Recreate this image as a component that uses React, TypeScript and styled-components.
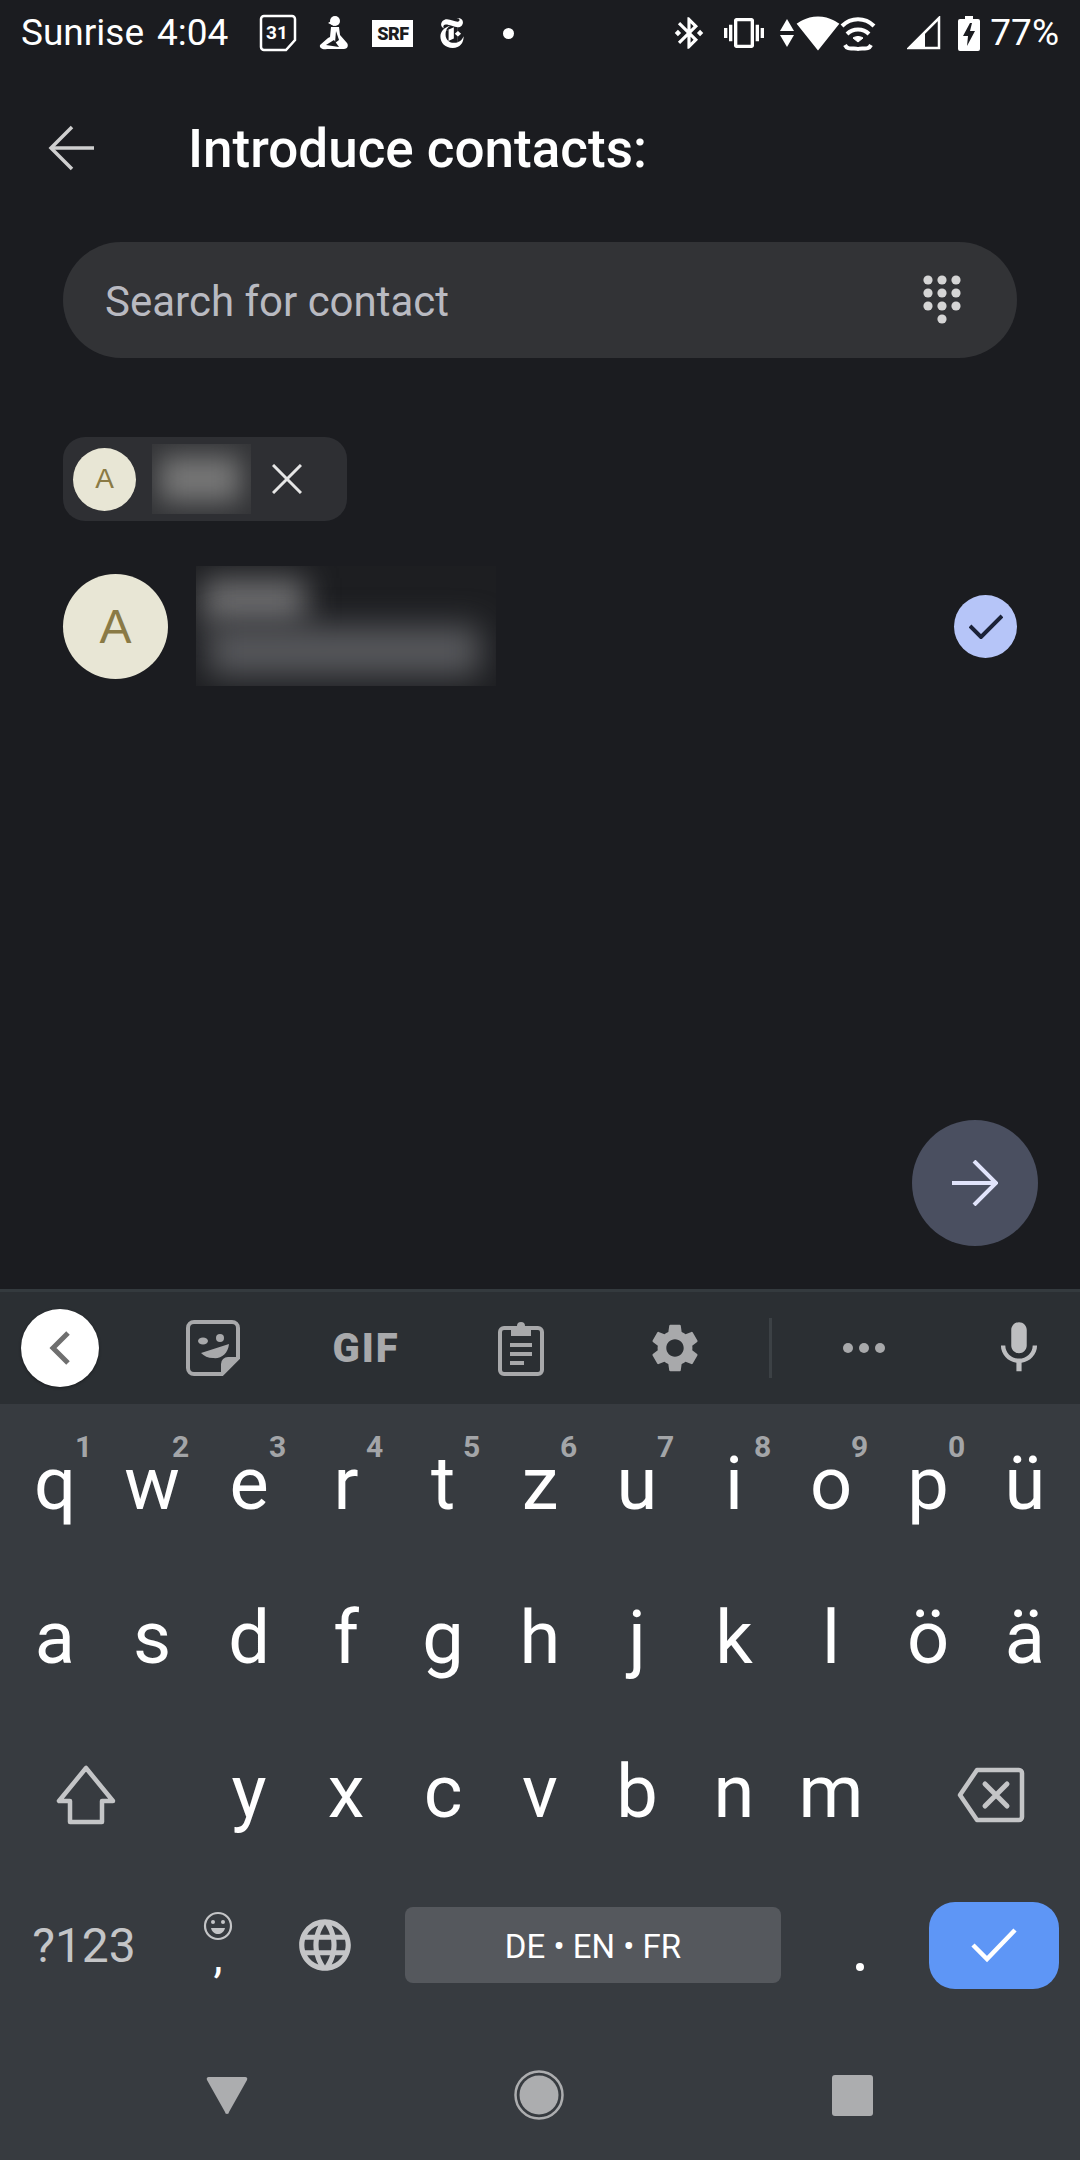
import React from 'react';
import styled, { createGlobalStyle } from 'styled-components';
import { MdBluetoothConnected, MdVibration, MdSignalWifi4Bar, MdSettings, MdMic, MdLanguage } from 'react-icons/md';
import { SiNewyorktimes } from 'react-icons/si';

const GlobalStyle = createGlobalStyle`
  html, body {
    margin: 0;
    padding: 0;
    background: #1b1c20;
    font-family: Roboto, "Noto Sans", sans-serif;
  }
`;

const Screen = styled.div`
  width: 1080px;
  height: 2160px;
  display: flex;
  flex-direction: column;
  overflow: hidden;
  background: #1b1c20;
  color: #fff;
`;

const StatusBar = styled.div`
  height: 66px;
  flex: none;
  display: flex;
  align-items: center;
  padding: 0 21px 0 21px;
  font-size: 37px;
  color: #fff;
`;

const StatusText = styled.span<{ $ml?: number }>`
  margin-left: ${(p) => p.$ml ?? 0}px;
  line-height: 66px;
`;

const StatusIcon = styled.span<{ $ml: number }>`
  margin-left: ${(p) => p.$ml}px;
  display: flex;
  align-items: center;
  justify-content: center;
`;

const SrfBadge = styled.span`
  margin-left: 23px;
  width: 41px;
  height: 27px;
  background: #fff;
  color: #1b1c20;
  font-size: 18px;
  font-weight: 900;
  letter-spacing: -0.5px;
  line-height: 28px;
  text-align: center;
`;

const StatusDot = styled.span`
  margin-left: 36px;
  width: 11px;
  height: 11px;
  border-radius: 50%;
  background: #fff;
`;

const Spacer = styled.div`
  flex: 1;
`;

const Header = styled.div`
  height: 164px;
  display: flex;
  align-items: center;
  padding-left: 48px;
  flex: none;
`;

const PageTitle = styled.h1`
  margin: 2px 0 0 94px;
  font-size: 53px;
  font-weight: 500;
  color: #fff;
`;

const Main = styled.main`
  position: relative;
  flex: 1;
  padding: 12px 63px 0;
`;

const SearchBar = styled.div`
  height: 116px;
  border-radius: 58px;
  background: #323336;
  display: flex;
  align-items: center;
  justify-content: space-between;
  padding: 0 54px 0 42px;
  font-size: 42px;
  color: #b9bac1;
`;

const SearchHint = styled.span`
  padding-top: 2px;
`;

const Chip = styled.div`
  margin-top: 79px;
  width: 284px;
  height: 84px;
  border-radius: 22px;
  background: #2e2f33;
  display: flex;
  align-items: center;
  padding-left: 10px;
  box-sizing: border-box;
`;

const Avatar = styled.div<{ $size: number; $font: number }>`
  width: ${(p) => p.$size}px;
  height: ${(p) => p.$size}px;
  flex: none;
  border-radius: 50%;
  background: #e8e6d5;
  color: #8a7a45;
  font-size: ${(p) => p.$font}px;
  font-family: "Liberation Sans", sans-serif;
  display: flex;
  align-items: center;
  justify-content: center;
`;

const BlurBox = styled.div<{ $w: number; $h: number; $bg: string; $ml: number }>`
  position: relative;
  width: ${(p) => p.$w}px;
  height: ${(p) => p.$h}px;
  margin-left: ${(p) => p.$ml}px;
  flex: none;
  overflow: hidden;
  background: ${(p) => p.$bg};
`;

const BlurBlob = styled.div<{ $l: number; $t: number; $w: number; $h: number; $c: string; $r: number }>`
  position: absolute;
  left: ${(p) => p.$l}px;
  top: ${(p) => p.$t}px;
  width: ${(p) => p.$w}px;
  height: ${(p) => p.$h}px;
  background: ${(p) => p.$c};
  filter: blur(${(p) => p.$r}px);
`;

const ContactRow = styled.div`
  margin-top: 45px;
  display: flex;
  align-items: center;
`;

const CheckBadge = styled.div`
  width: 63px;
  height: 63px;
  border-radius: 50%;
  background: #b6c5f8;
  margin-left: auto;
  display: flex;
  align-items: center;
  justify-content: center;
`;

const Fab = styled.div`
  position: absolute;
  right: 42px;
  bottom: 43px;
  width: 126px;
  height: 126px;
  border-radius: 50%;
  background: #4a4f60;
  display: flex;
  align-items: center;
  justify-content: center;
`;

const Keyboard = styled.div`
  flex: none;
  height: 871px;
  background: #373b40;
  display: flex;
  flex-direction: column;
  overflow: hidden;
`;

const Toolbar = styled.div`
  height: 112px;
  flex: none;
  border-top: 3px solid #343a3e;
  background: #2b2f33;
  display: grid;
  grid-template-columns: 120px 186px 120px 190px 118px 72px 116px 194px;
  align-items: center;
  color: #a8a9ab;
`;

const ToolSlot = styled.div`
  display: flex;
  align-items: center;
  justify-content: center;
`;

const ToolBack = styled.div`
  width: 78px;
  height: 78px;
  border-radius: 50%;
  background: #fff;
  box-shadow: 0 1px 3px rgba(0, 0, 0, 0.4);
  display: flex;
  align-items: center;
  justify-content: center;
`;

const GifLabel = styled.span`
  font-size: 40px;
  font-weight: 900;
  letter-spacing: 2px;
  color: #a8a9ab;
`;

const ToolDivider = styled.div`
  width: 3px;
  height: 60px;
  background: #3c4145;
`;

const Rows = styled.div`
  padding: 2px 0 0;
  display: flex;
  flex-direction: column;
`;

const KeyRow = styled.div`
  height: 154px;
  padding: 0 6.5px;
  display: grid;
  grid-template-columns: repeat(11, 97px);
  align-items: center;
`;

const Key = styled.div<{ $span?: number }>`
  position: relative;
  grid-column: span ${(p) => p.$span ?? 1};
  height: 100%;
  display: flex;
  align-items: center;
  justify-content: center;
  font-size: 74px;
  font-weight: 400;
  color: #fff;
`;

const IconKey = styled(Key)<{ $shift: number }>`
  padding-top: 8px;
  box-sizing: border-box;
  padding-left: ${(p) => Math.max(p.$shift, 0)}px;
  padding-right: ${(p) => Math.max(-p.$shift, 0)}px;
`;

const HintDigit = styled.span`
  position: absolute;
  left: calc(50% + 20px);
  top: 24px;
  font-size: 30px;
  line-height: 34px;
  font-weight: 700;
  color: #a3a5a8;
`;

const BottomRow = styled.div`
  height: 154px;
  display: grid;
  grid-template-columns: 168px 100px 114px 422px 112px 156px;
  align-items: center;
`;

const BottomKey = styled.div`
  display: flex;
  align-items: center;
  justify-content: center;
  flex-direction: column;
  color: #c4c5c7;
`;

const SymbolLabel = styled.span`
  font-size: 48px;
  color: #c4c5c7;
`;

const Comma = styled.span`
  font-size: 46px;
  line-height: 30px;
  height: 38px;
  color: #fff;
`;

const SpaceBar = styled.div`
  width: 376px;
  height: 76px;
  padding-top: 2px;
  box-sizing: border-box;
  border-radius: 8px;
  background: #55585d;
  color: #fff;
  font-size: 33px;
  display: flex;
  align-items: center;
  justify-content: center;
`;

const Period = styled.span`
  width: 8px;
  height: 8px;
  border-radius: 50%;
  background: #fff;
  margin-top: 44px;
`;

const EnterKey = styled.div`
  width: 130px;
  height: 87px;
  border-radius: 26px;
  background: #5e96f6;
  display: flex;
  align-items: center;
  justify-content: center;
`;

const NavBar = styled.div`
  flex: 1;
  display: grid;
  grid-template-columns: 454px 170px 456px;
  padding-top: 8px;
  align-items: center;
  justify-items: center;
`;

const CalendarIcon = () => (
  <svg width="38" height="38" viewBox="0 0 38 38">
    <path d="M5 2h28a3 3 0 0 1 3 3v21l-9 10H5a3 3 0 0 1-3-3V5a3 3 0 0 1 3-3z" fill="none" stroke="#fff" strokeWidth="2.5" />
    <text x="18" y="25" textAnchor="middle" fontSize="19" fontWeight="700" fill="#fff" fontFamily="Roboto">31</text>
  </svg>
);

const FigureIcon = () => (
  <svg width="30" height="36" viewBox="0 0 30 36" fill="#fff">
    <circle cx="16" cy="6" r="5" />
    <path d="M9 8l5-3 1 6z" />
    <path d="M12 12h8l1 8 7 8c2 3 0 6-3 6H8c-4 1-8-1-7-4l8-7 2-1z" />
    <path d="M7 30l8-5 5 7z" fill="#1b1c20" />
    <path d="M17 16l3 9-4 3z" fill="#1b1c20" />
  </svg>
);

const UpDownIcon = () => (
  <svg width="16" height="29" viewBox="0 0 16 29" fill="#fff">
    <path d="M8 0l7 12H1z" />
    <path d="M1 16h14l-7 12z" />
  </svg>
);

const WifiCallIcon = () => (
  <svg width="36" height="36" viewBox="0 0 36 36" fill="none" stroke="#fff">
    <path d="M2 11C11 2 25 2 34 11" strokeWidth="4" />
    <path d="M7 19c6-6 16-6 22 0" strokeWidth="4" />
    <path d="M13 23l5 4 5-4c-3-2-7-2-10 0z" fill="#fff" strokeWidth="1" />
    <path d="M5 30c3 6 8 2 13 4 5-2 10 2 13-4" strokeWidth="4" />
  </svg>
);

const SignalIcon = () => (
  <svg width="34" height="34" viewBox="0 0 34 34">
    <path d="M32 2v30H2z" fill="none" stroke="#fff" strokeWidth="2.5" />
    <path d="M18 17v16H2z" fill="#fff" />
  </svg>
);

const BatteryIcon = () => (
  <svg width="22" height="35" viewBox="0 0 22 35">
    <path d="M7 0h8v3h5a2 2 0 0 1 2 2v28a2 2 0 0 1-2 2H2a2 2 0 0 1-2-2V5a2 2 0 0 1 2-2h5z" fill="#fff" />
    <path d="M12 7l-7 13h5l-1 10 8-15h-5l2-8z" fill="#1b1c20" />
  </svg>
);

const BackArrow = () => (
  <svg width="46" height="46" viewBox="0 0 46 46" fill="none" stroke="#cfcfcf" strokeWidth="3.5">
    <path d="M46 23H3" />
    <path d="M24 2L3 23l21 21" />
  </svg>
);

const DialpadIcon = () => (
  <svg width="40" height="50" viewBox="0 0 40 50" fill="#d5d5d5">
    {[0, 1, 2].map((row) =>
      [0, 1, 2].map((col) => <circle key={`${row}-${col}`} cx={5 + col * 14} cy={5 + row * 13} r="4.6" />),
    )}
    <circle cx="19" cy="44" r="4.6" />
  </svg>
);

const CrossIcon = () => (
  <svg width="30" height="30" viewBox="0 0 30 30" stroke="#e6e6e6" strokeWidth="3">
    <path d="M1 1l28 28M29 1L1 29" />
  </svg>
);

const CheckSmall = () => (
  <svg width="34" height="26" viewBox="0 0 34 26" fill="none" stroke="#1b2238" strokeWidth="4">
    <path d="M1 13l11 11L33 3" />
  </svg>
);

const NextArrow = () => (
  <svg width="46" height="46" viewBox="0 0 46 46" fill="none" stroke="#e1e4fb" strokeWidth="4">
    <path d="M0 23h43" />
    <path d="M22 1l22 22-22 22" />
  </svg>
);

const ChevronLeft = () => (
  <svg width="22" height="34" viewBox="0 0 22 34" fill="none" stroke="#6f6f6f" strokeWidth="5">
    <path d="M19 2L4 17l15 15" />
  </svg>
);

const StickerIcon = () => (
  <svg width="54" height="56" viewBox="0 0 54 56" fill="#a8a9ab">
    <path d="M8 2h38a6 6 0 0 1 6 6v30L36 54H8a6 6 0 0 1-6-6V8a6 6 0 0 1 6-6z" fill="none" stroke="#a8a9ab" strokeWidth="4" />
    <path d="M52 37H42a7 7 0 0 0-7 7v10z" />
    <ellipse cx="17" cy="21" rx="5" ry="3.5" />
    <ellipse cx="34" cy="18" rx="4" ry="4" />
    <path d="M15 33l28-9c-1 10-8 15-16 14-5 0-9-2-12-5z" />
  </svg>
);

const ClipboardIcon = () => (
  <svg width="46" height="56" viewBox="0 0 46 56" fill="#a8a9ab">
    <rect x="2" y="8" width="42" height="46" rx="4" fill="none" stroke="#a8a9ab" strokeWidth="4" />
    <path d="M13 6h6a4 4 0 0 1 8 0h6v10H13z" />
    <rect x="12" y="23" width="22" height="4" />
    <rect x="12" y="32" width="22" height="4" />
    <rect x="12" y="41" width="14" height="4" />
  </svg>
);

const DotsIcon = () => (
  <svg width="42" height="12" viewBox="0 0 42 12" fill="#a8a9ab">
    <circle cx="5" cy="6" r="5" />
    <circle cx="21" cy="6" r="5" />
    <circle cx="37" cy="6" r="5" />
  </svg>
);

const ShiftIcon = () => (
  <svg width="60" height="60" viewBox="0 0 60 60" fill="none" stroke="#c4c5c7" strokeWidth="4.5" strokeLinejoin="round">
    <path d="M30 3L3 36h11v21h32V36h11z" />
  </svg>
);

const BackspaceIcon = () => (
  <svg width="68" height="56" viewBox="0 0 68 56" fill="none" stroke="#c4c5c7" strokeWidth="4.5" strokeLinejoin="round">
    <path d="M20 3h42a3 3 0 0 1 3 3v44a3 3 0 0 1-3 3H20L3 28z" />
    <path d="M28 17l22 22M50 17L28 39" strokeWidth="5" strokeLinecap="round" />
  </svg>
);

const SmileIcon = () => (
  <svg width="30" height="30" viewBox="0 0 30 30">
    <circle cx="15" cy="15" r="13" fill="none" stroke="#c4c5c7" strokeWidth="2.2" />
    <circle cx="10" cy="11" r="2" fill="#c4c5c7" />
    <circle cx="20" cy="11" r="2" fill="#c4c5c7" />
    <path d="M8 17h14c-1 4-4 6-7 6s-6-2-7-6z" fill="#c4c5c7" />
  </svg>
);

const EnterCheck = () => (
  <svg width="46" height="36" viewBox="0 0 46 36" fill="none" stroke="#fff" strokeWidth="4.5">
    <path d="M2 18l14 14L44 3" />
  </svg>
);

const NavBack = () => (
  <svg width="46" height="42" viewBox="0 0 46 42">
    <path d="M5 3h36a2 2 0 0 1 2 3L25 38a2 2 0 0 1-4 0L3 6a2 2 0 0 1 2-3z" fill="#acadaf" />
  </svg>
);

const NavHome = () => (
  <svg width="50" height="50" viewBox="0 0 50 50">
    <circle cx="25" cy="25" r="23.5" fill="none" stroke="#acadaf" strokeWidth="2.5" />
    <circle cx="25" cy="25" r="19.5" fill="#acadaf" />
  </svg>
);

const NavRecents = styled.div`
  width: 41px;
  height: 41px;
  border-radius: 3px;
  background: #acadaf;
`;

const topRow = [
  ['q', '1'], ['w', '2'], ['e', '3'], ['r', '4'], ['t', '5'], ['z', '6'],
  ['u', '7'], ['i', '8'], ['o', '9'], ['p', '0'], ['ü', ''],
];
const midRow = ['a', 's', 'd', 'f', 'g', 'h', 'j', 'k', 'l', 'ö', 'ä'];
const lowRow = ['y', 'x', 'c', 'v', 'b', 'n', 'm'];

export default function App() {
  return (
    <Screen>
      <GlobalStyle />
      <StatusBar>
        <StatusText>Sunrise</StatusText>
        <StatusText $ml={13}>4:04</StatusText>
        <StatusIcon $ml={31}><CalendarIcon /></StatusIcon>
        <StatusIcon $ml={22}><FigureIcon /></StatusIcon>
        <SrfBadge>SRF</SrfBadge>
        <StatusIcon $ml={24}><SiNewyorktimes size={30} color="#fff" /></StatusIcon>
        <StatusDot />
        <Spacer />
        <MdBluetoothConnected size={38} color="#fff" />
        <StatusIcon $ml={16}><MdVibration size={40} color="#fff" /></StatusIcon>
        <StatusIcon $ml={15}><UpDownIcon /></StatusIcon>
        <StatusIcon $ml={1}><MdSignalWifi4Bar size={44} color="#fff" /></StatusIcon>
        <StatusIcon $ml={0}><WifiCallIcon /></StatusIcon>
        <StatusIcon $ml={31}><SignalIcon /></StatusIcon>
        <StatusIcon $ml={17}><BatteryIcon /></StatusIcon>
        <StatusText $ml={10}>77%</StatusText>
      </StatusBar>
      <Header>
        <BackArrow />
        <PageTitle>Introduce contacts:</PageTitle>
      </Header>
      <Main>
        <SearchBar>
          <SearchHint>Search for contact</SearchHint>
          <DialpadIcon />
        </SearchBar>
        <Chip>
          <Avatar $size={63} $font={28}>A</Avatar>
          <BlurBox $w={99} $h={70} $bg="#333437" $ml={16}>
            <BlurBlob $l={8} $t={12} $w={80} $h={46} $c="#767676" $r={13} />
          </BlurBox>
          <StatusIcon $ml={21}><CrossIcon /></StatusIcon>
        </Chip>
        <ContactRow>
          <Avatar $size={105} $font={48}>A</Avatar>
          <BlurBox $w={300} $h={120} $bg="#1d1e21" $ml={28}>
            <BlurBlob $l={6} $t={12} $w={104} $h={46} $c="#6c6c6e" $r={15} />
            <BlurBlob $l={12} $t={60} $w={272} $h={50} $c="#58595d" $r={16} />
          </BlurBox>
          <CheckBadge><CheckSmall /></CheckBadge>
        </ContactRow>
        <Fab><NextArrow /></Fab>
      </Main>
      <Keyboard>
        <Toolbar>
          <ToolSlot><ToolBack><ChevronLeft /></ToolBack></ToolSlot>
          <ToolSlot><StickerIcon /></ToolSlot>
          <ToolSlot><GifLabel>GIF</GifLabel></ToolSlot>
          <ToolSlot><ClipboardIcon /></ToolSlot>
          <ToolSlot><MdSettings size={58} /></ToolSlot>
          <ToolSlot><ToolDivider /></ToolSlot>
          <ToolSlot><DotsIcon /></ToolSlot>
          <ToolSlot><MdMic size={62} color="#bdbec0" /></ToolSlot>
        </Toolbar>
        <Rows>
          <KeyRow>
            {topRow.map(([letter, digit]) => (
              <Key key={letter}>
                {letter}
                {digit && <HintDigit>{digit}</HintDigit>}
              </Key>
            ))}
          </KeyRow>
          <KeyRow>
            {midRow.map((letter) => <Key key={letter}>{letter}</Key>)}
          </KeyRow>
          <KeyRow>
            <IconKey $span={2} $shift={-36}><ShiftIcon /></IconKey>
            {lowRow.map((letter) => <Key key={letter}>{letter}</Key>)}
            <IconKey $span={2} $shift={28}><BackspaceIcon /></IconKey>
          </KeyRow>
          <BottomRow>
            <BottomKey><SymbolLabel>?123</SymbolLabel></BottomKey>
            <BottomKey><SmileIcon /><Comma>,</Comma></BottomKey>
            <BottomKey><MdLanguage size={62} /></BottomKey>
            <BottomKey><SpaceBar>DE • EN • FR</SpaceBar></BottomKey>
            <BottomKey><Period /></BottomKey>
            <BottomKey><EnterKey><EnterCheck /></EnterKey></BottomKey>
          </BottomRow>
        </Rows>
        <NavBar>
          <NavBack />
          <NavHome />
          <NavRecents />
        </NavBar>
      </Keyboard>
    </Screen>
  );
}
